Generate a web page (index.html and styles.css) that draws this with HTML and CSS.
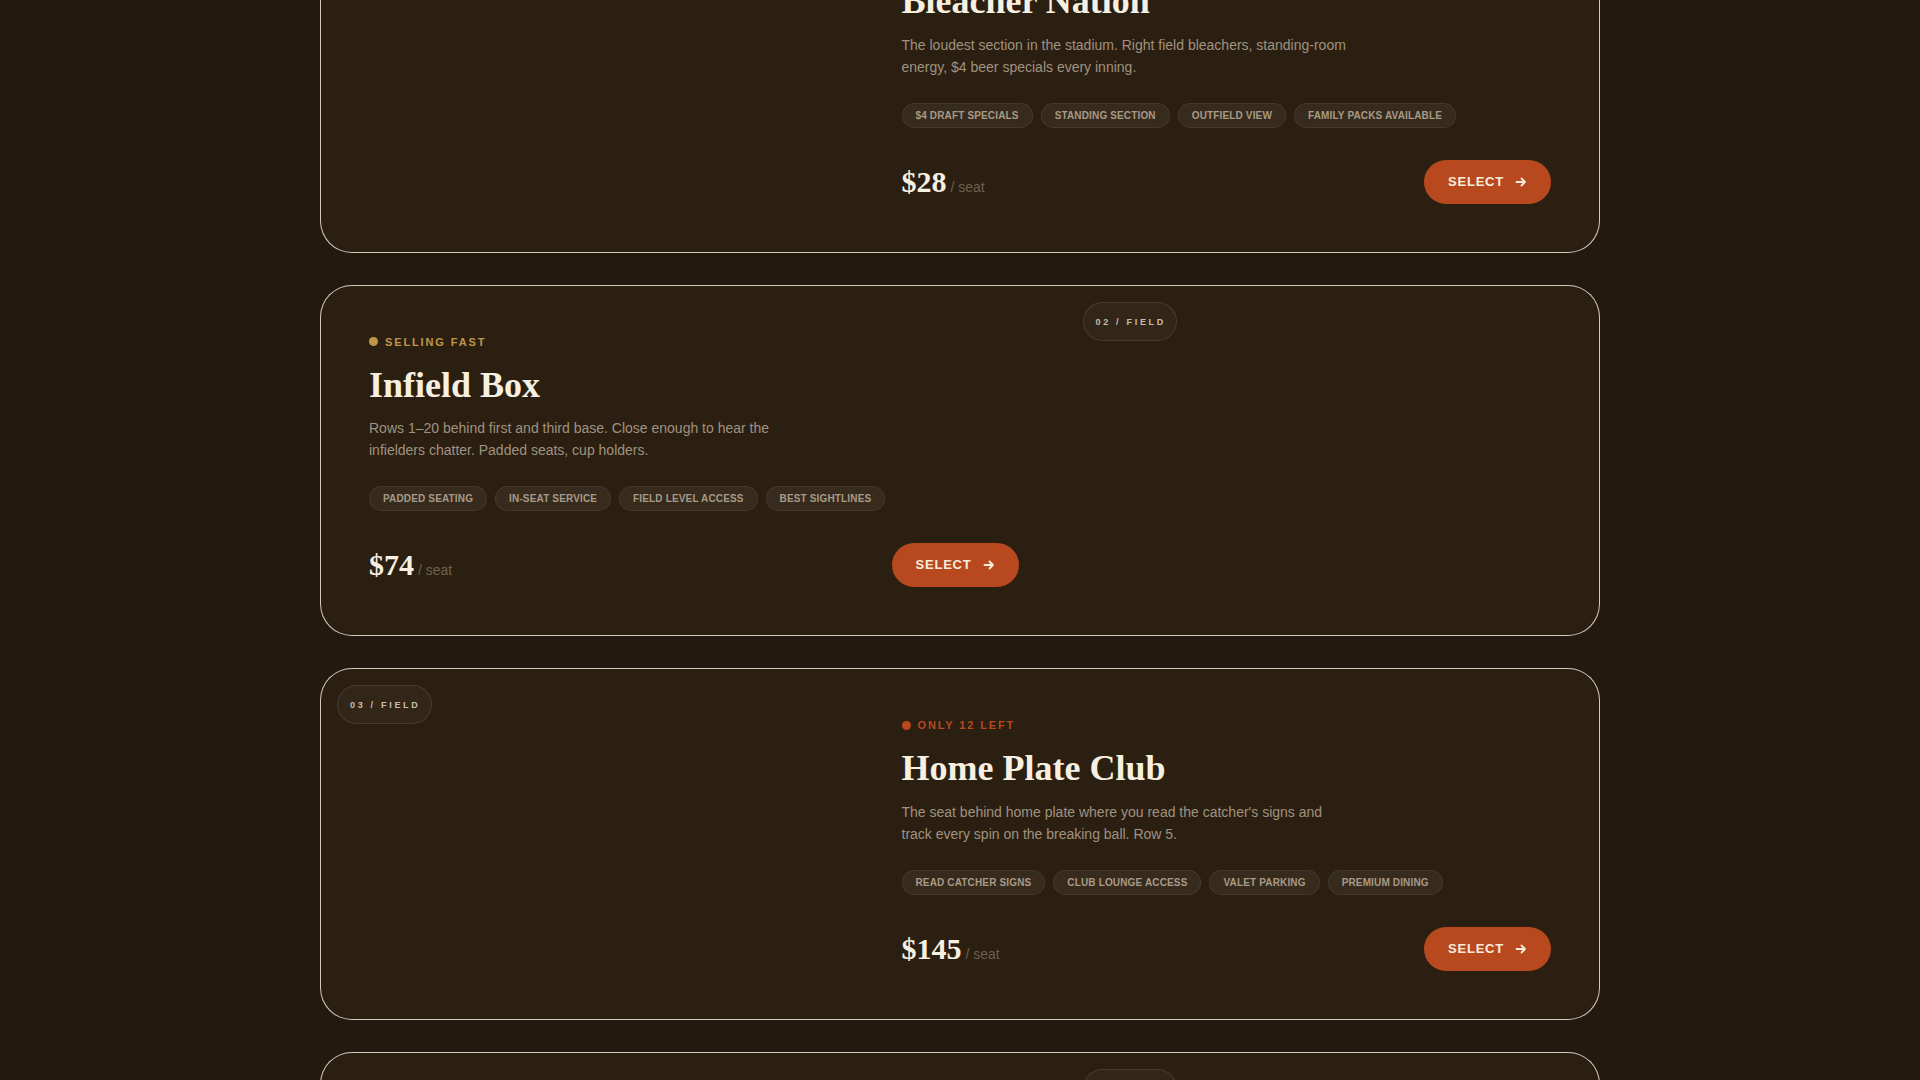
FILE: index.html
```html
<!DOCTYPE html>
<html lang="en">
<head>
    <meta charset="UTF-8">
    <meta name="viewport" content="width=device-width, initial-scale=1.0">
    <title>Choose Your Seats | Ballpark Tickets</title>
    <link rel="stylesheet" href="styles.css">
</head>
<body>
    <main class="tiers">

        <article class="tier tier--flip">
            <div class="tier-media">
                <span class="tier-badge">01 / Field</span>
            </div>
            <div class="tier-body">
                <p class="tier-status status--gold"><span class="dot"></span>Best Value</p>
                <h2 class="tier-title">Bleacher Nation</h2>
                <p class="tier-desc">The loudest section in the stadium. Right field bleachers, standing-room energy, $4 beer specials every inning.</p>
                <ul class="tier-tags">
                    <li>$4 Draft Specials</li>
                    <li>Standing Section</li>
                    <li>Outfield View</li>
                    <li>Family Packs Available</li>
                </ul>
                <div class="tier-foot">
                    <p class="tier-price">$28<span>/ seat</span></p>
                    <button type="button" class="select-btn">Select
                        <svg viewBox="0 0 12 12" width="12" height="12" aria-hidden="true"><path d="M1.5 6h8.5M6.5 2.5 10 6l-3.5 3.5"/></svg>
                    </button>
                </div>
            </div>
        </article>

        <article class="tier">
            <div class="tier-media">
                <span class="tier-badge">02 / Field</span>
            </div>
            <div class="tier-body">
                <p class="tier-status status--gold"><span class="dot"></span>Selling Fast</p>
                <h2 class="tier-title">Infield Box</h2>
                <p class="tier-desc">Rows 1–20 behind first and third base. Close enough to hear the infielders chatter. Padded seats, cup holders.</p>
                <ul class="tier-tags">
                    <li>Padded Seating</li>
                    <li>In-Seat Service</li>
                    <li>Field Level Access</li>
                    <li>Best Sightlines</li>
                </ul>
                <div class="tier-foot">
                    <p class="tier-price">$74<span>/ seat</span></p>
                    <button type="button" class="select-btn">Select
                        <svg viewBox="0 0 12 12" width="12" height="12" aria-hidden="true"><path d="M1.5 6h8.5M6.5 2.5 10 6l-3.5 3.5"/></svg>
                    </button>
                </div>
            </div>
        </article>

        <article class="tier tier--flip">
            <div class="tier-media">
                <span class="tier-badge">03 / Field</span>
            </div>
            <div class="tier-body">
                <p class="tier-status status--red"><span class="dot"></span>Only 12 Left</p>
                <h2 class="tier-title">Home Plate Club</h2>
                <p class="tier-desc">The seat behind home plate where you read the catcher's signs and track every spin on the breaking ball. Row 5.</p>
                <ul class="tier-tags">
                    <li>Read Catcher Signs</li>
                    <li>Club Lounge Access</li>
                    <li>Valet Parking</li>
                    <li>Premium Dining</li>
                </ul>
                <div class="tier-foot">
                    <p class="tier-price">$145<span>/ seat</span></p>
                    <button type="button" class="select-btn">Select
                        <svg viewBox="0 0 12 12" width="12" height="12" aria-hidden="true"><path d="M1.5 6h8.5M6.5 2.5 10 6l-3.5 3.5"/></svg>
                    </button>
                </div>
            </div>
        </article>

        <article class="tier">
            <div class="tier-media">
                <span class="tier-badge">04 / Field</span>
            </div>
            <div class="tier-body">
                <p class="tier-status status--gold"><span class="dot"></span>Limited</p>
                <h2 class="tier-title">Owner's Suite</h2>
                <p class="tier-desc">A private glass-front suite above the dugout. Catered buffet, climate control and your own host all game long.</p>
                <ul class="tier-tags">
                    <li>Private Suite</li>
                    <li>Catered Buffet</li>
                    <li>Dedicated Host</li>
                    <li>Climate Control</li>
                </ul>
                <div class="tier-foot">
                    <p class="tier-price">$320<span>/ seat</span></p>
                    <button type="button" class="select-btn">Select
                        <svg viewBox="0 0 12 12" width="12" height="12" aria-hidden="true"><path d="M1.5 6h8.5M6.5 2.5 10 6l-3.5 3.5"/></svg>
                    </button>
                </div>
            </div>
        </article>

    </main>
</body>
</html>
```

FILE: styles.css
```css
:root {
    --bg-color: #221a0e;
    --card-color: #2a1f11;
    --cream: #f7efe0;
    --muted: #a09280;
    --gold: #c09648;
    --rust: #b8491f;
    --radius: 32px;
}

* {
    box-sizing: border-box;
    margin: 0;
    padding: 0;
}

body {
    font-family: 'Liberation Sans', Arial, sans-serif;
    background-color: var(--bg-color);
    color: var(--cream);
}

.tiers {
    max-width: 1280px;
    margin: -99px auto 0;
    display: flex;
    flex-direction: column;
    gap: 32px;
    padding-bottom: 64px;
}

.tier {
    display: grid;
    grid-template-columns: 7fr 5fr;
    background-color: var(--card-color);
    border: 1px solid rgba(243, 232, 210, 0.85);
    border-radius: var(--radius);
    overflow: hidden;
}

.tier--flip {
    grid-template-columns: 5fr 7fr;
}

.tier-media {
    order: 2;
    padding: 16px;
}

.tier--flip .tier-media {
    order: 0;
}

.tier--flip .tier-body {
    order: 1;
}

.tier-badge {
    display: inline-block;
    padding: 14px 10px 13px 12px;
    font-size: 9px;
    line-height: 10px;
    font-weight: 700;
    letter-spacing: 0.3em;
    text-transform: uppercase;
    color: #c9bda9;
    background-color: rgba(255, 240, 215, 0.04);
    border: 1px solid rgba(255, 240, 215, 0.1);
    border-radius: 999px;
}

.tier-body {
    padding: 48px;
    display: flex;
    flex-direction: column;
}

.tier-status {
    display: flex;
    align-items: center;
    gap: 7px;
    font-size: 11px;
    line-height: 16px;
    font-weight: 700;
    letter-spacing: 0.17em;
    text-transform: uppercase;
    margin-bottom: 16px;
}

.tier-status .dot {
    width: 9px;
    height: 9px;
    border-radius: 50%;
    background-color: currentColor;
}

.status--gold {
    color: var(--gold);
}

.status--red {
    color: var(--rust);
}

.tier-title {
    font-family: 'Liberation Serif', 'Times New Roman', serif;
    font-size: 36px;
    line-height: 1.1;
    font-weight: 700;
    color: var(--cream);
    margin-bottom: 12px;
}

.tier-desc {
    max-width: 450px;
    font-size: 14px;
    line-height: 22px;
    color: var(--muted);
    margin-bottom: 25px;
}

.tier-tags {
    list-style: none;
    display: flex;
    flex-wrap: wrap;
    gap: 8px;
    margin-bottom: 32px;
}

.tier-tags li {
    padding: 6px 13px 5px;
    font-size: 10px;
    line-height: 12px;
    font-weight: 700;
    letter-spacing: 0.015em;
    text-transform: uppercase;
    color: #a89a86;
    background-color: rgba(255, 240, 215, 0.06);
    border: 1px solid rgba(255, 240, 215, 0.08);
    border-radius: 999px;
}

.tier-foot {
    display: flex;
    align-items: center;
    justify-content: space-between;
}

.tier-price {
    font-family: 'Liberation Serif', 'Times New Roman', serif;
    font-size: 30px;
    font-weight: 700;
    color: var(--cream);
}

.tier-price span {
    font-family: 'Liberation Sans', Arial, sans-serif;
    font-size: 14px;
    font-weight: 400;
    color: #6f604d;
    margin-left: 4px;
}

.select-btn {
    display: flex;
    align-items: center;
    gap: 11px;
    padding: 15px 24px;
    font-family: inherit;
    font-size: 13px;
    line-height: 14px;
    font-weight: 700;
    letter-spacing: 0.06em;
    text-transform: uppercase;
    color: #f8ecdc;
    background-color: var(--rust);
    border: none;
    border-radius: 999px;
    cursor: pointer;
    transition: background-color 0.2s;
}

.select-btn:hover {
    background-color: #a33e18;
}

.select-btn svg {
    fill: none;
    stroke: currentColor;
    stroke-width: 1.8;
    stroke-linecap: round;
    stroke-linejoin: round;
}
```
